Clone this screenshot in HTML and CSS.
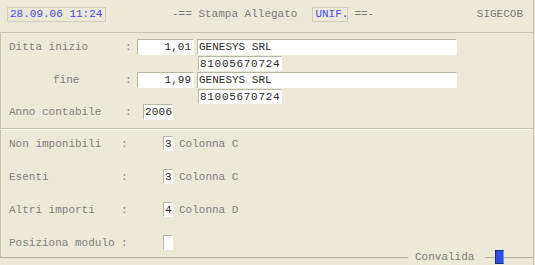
FILE: index.html
```html
<!DOCTYPE html>
<html>
<head>
<meta charset="utf-8">
<link rel="stylesheet" href="styles.css">
</head>
<body>
<div class="screen">
  <div class="header">
    <div class="datebox">28.09.06 11:24</div>
    <div class="title">-== Stampa Allegato</div>
    <div class="unif">UNIF.</div>
    <div class="title2">==-</div>
    <div class="app">SIGECOB</div>
  </div>
  <div class="panel1">
    <div class="row r1">
      <div class="lbl">Ditta inizio</div><div class="colon">:</div>
      <div class="fld num">1,01</div>
      <div class="fld name">GENESYS SRL</div>
    </div>
    <div class="row r2">
      <div class="fld code">81005670724</div>
    </div>
    <div class="row r3">
      <div class="lbl fine">fine</div><div class="colon">:</div>
      <div class="fld num">1,99</div>
      <div class="fld name">GENESYS SRL</div>
    </div>
    <div class="row r4">
      <div class="fld code">81005670724</div>
    </div>
    <div class="row r5">
      <div class="lbl">Anno contabile</div><div class="colon">:</div>
      <div class="fld year">2006</div>
    </div>
  </div>
  <div class="panel2">
    <div class="row2">
      <div class="lbl">Non imponibili</div><div class="colon">:</div>
      <div class="fld one">3</div><div class="desc">Colonna C</div>
    </div>
    <div class="row2">
      <div class="lbl">Esenti</div><div class="colon">:</div>
      <div class="fld one">3</div><div class="desc">Colonna C</div>
    </div>
    <div class="row2">
      <div class="lbl">Altri importi</div><div class="colon">:</div>
      <div class="fld one">4</div><div class="desc">Colonna D</div>
    </div>
    <div class="row2">
      <div class="lbl">Posiziona modulo</div><div class="colon">:</div>
      <div class="fld one"></div>
    </div>
  </div>
  <div class="footer">
    <div class="seg segl"></div>
    <div class="conv">Convalida</div>
    <div class="seg segm"></div>
    <div class="btn"></div>
    <div class="seg segr"></div>
  </div>
</div>
</body>
</html>
```
FILE: styles.css
```css
html, body {
  margin: 0;
  padding: 0;
}
body {
  background: #ece9d8;
  font: 11px "Liberation Mono", "Courier New", monospace;
  color: #808080;
  width: 535px;
  height: 265px;
  overflow: hidden;
}
.screen {
  width: 533px;
  height: 265px;
  border-right: 1px solid #c5c1ae;
}
.header {
  height: 33px;
  box-sizing: border-box;
  border-bottom: 1px solid #c5c1ae;
  display: flex;
  align-items: flex-start;
  padding-top: 7px;
}
.datebox {
  margin-left: 7px;
  width: 99px;
  height: 15px;
  box-sizing: border-box;
  border: 1px solid #d0ccbb;
  color: #4848e8;
  line-height: 13px;
  padding-left: 2px;
}
.title {
  margin-left: 66px;
  line-height: 15px;
  color: #7a7a7a;
}
.unif {
  margin-left: 15px;
  width: 36px;
  height: 15px;
  box-sizing: border-box;
  border: 1px solid #d0ccbb;
  color: #4848e8;
  line-height: 13px;
  padding-left: 2px;
}
.title2 {
  margin-left: 6px;
  line-height: 15px;
  color: #7a7a7a;
}
.app {
  margin-left: auto;
  margin-right: 10px;
  line-height: 15px;
  color: #7a7a7a;
}
.panel1 {
  height: 96px;
  box-sizing: border-box;
  border-left: 1px solid #c5c1ae;
  border-bottom: 1px solid #c5c1ae;
  padding-top: 6px;
}
.row {
  display: flex;
  align-items: center;
  height: 16px;
}
.r2 { margin-top: 1px; height: 15px; }
.r3 { margin-top: 1px; }
.r4 { margin-top: 1px; height: 15px; }
.r5 { margin-top: 0; }
.lbl {
  width: 116px;
  padding-left: 8px;
  box-sizing: content-box;
  white-space: pre;
}
.lbl.fine {
  width: 72px;
  padding-left: 52px;
}
.colon {
  width: 12px;
}
.fld {
  background: #fff;
  border: 1px solid;
  border-color: #b9b5a4 #fff #fff #b9b5a4;
  box-sizing: border-box;
  height: 100%;
  line-height: 14px;
  color: #2a2a2a;
  white-space: pre;
}
.num {
  width: 57px;
  text-align: right;
  padding-right: 2px;
}
.name {
  margin-left: 3px;
  width: 260px;
  padding-left: 1px;
}
.code {
  margin-left: 197px;
  width: 84px;
  padding-left: 1px;
  letter-spacing: 0.7px;
}
.year {
  margin-left: 6px;
  width: 30px;
  padding-left: 1px;
  letter-spacing: 0.2px;
}
.panel2 {
  height: 121px;
  box-sizing: border-box;
  border-left: 1px solid #c5c1ae;
  border-top: 1px solid #fbfaf5;
  padding-top: 6px;
  display: flex;
  flex-direction: column;
  gap: 18px;
}
.row2 {
  display: flex;
  align-items: center;
  height: 15px;
}
.row2 .lbl {
  width: 112px;
}
.row2 .colon {
  width: 42px;
}
.one {
  width: 10px;
  padding-left: 1px;
}
.desc {
  margin-left: 6px;
}
.footer {
  display: flex;
  align-items: flex-start;
  height: 14px;
}
.seg {
  height: 8px;
  box-sizing: border-box;
  border-bottom: 1px solid #b5b19f;
}
.segl {
  width: 408px;
  border-left: 1px solid #c5c1ae;
}
.conv {
  margin-left: 7px;
  width: 70px;
  line-height: 14px;
  color: #7a7a7a;
}
.segm {
  width: 10px;
}
.btn {
  width: 9px;
  height: 14px;
  box-sizing: border-box;
  background: #3050e0;
  border: 1px solid #1c2a7a;
  border-right-color: #8090e0;
}
.segr {
  flex: 1;
}
```
